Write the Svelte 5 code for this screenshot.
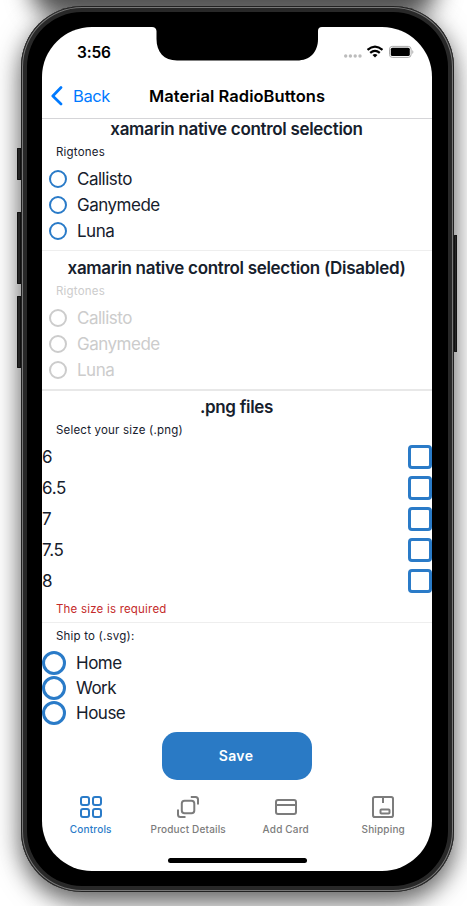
<script>
  const tones = ['Callisto', 'Ganymede', 'Luna'];
  const sizes = ['6', '6.5', '7', '7.5', '8'];
  const places = ['Home', 'Work', 'House'];
</script>

<div class="stage">
  <i class="shade"></i>
  <i class="key k1"></i><i class="key k2"></i><i class="key k3"></i><i class="key k4"></i>
  <div class="phone">
    <div class="screen">
      <svg class="notch" width="170" height="35" viewBox="0 0 170 35"><path d="M0 0H170Q166 0 166 4V12C166 25 158 33.500 145 33.500H25C12 33.500 4.500 25 4.500 12V4Q4 0 0 0Z" fill="#000" /></svg>
      <div class="status">
        <span class="time">3:56</span>
        <svg width="72" height="16" viewBox="0 0 72 16">
          <g fill="#bcbcbc"><circle cx="2.700" cy="11" r="1.700" /><circle cx="7.400" cy="11" r="1.700" /><circle cx="12.200" cy="11" r="1.700" /><circle cx="17" cy="11" r="1.700" /></g>
          <g fill="none" stroke="#000" stroke-width="2.200"><path d="M24.500 4.900Q32 -1.700 39.500 4.900" /><path d="M27.200 7.900Q32 3.700 36.800 7.900" /></g>
          <path d="M29.500 9.900Q32 7.900 34.500 9.900L32 12.500Z" />
          <rect x="46.500" y="1.400" width="21.600" height="11" rx="2.800" fill="none" stroke="#aaa" />
          <rect x="47.800" y="2.700" width="19" height="8.400" rx="1.600" />
          <path d="M69.300 5q2.200 2 0 4Z" fill="#aaa" />
        </svg>
      </div>
      <div class="nav">
        <svg width="14" height="20" viewBox="0 0 14 20"><path d="M11 1.500L2.800 10L11 18" fill="none" stroke="#007aff" stroke-width="2.700" stroke-linecap="round" stroke-linejoin="round" /></svg>
        <span class="back">Back</span>
        <span class="title">Material RadioButtons</span>
      </div>

      <section class="native">
        <h2>xamarin native control selection</h2>
        <p class="label">Rigtones</p>
        {#each tones as t}<div class="row"><i class="radio"></i><span>{t}</span></div>{/each}
      </section>
      <section class="native disabled">
        <h2>xamarin native control selection (Disabled)</h2>
        <p class="label">Rigtones</p>
        {#each tones as t}<div class="row"><i class="radio"></i><span>{t}</span></div>{/each}
      </section>
      <section class="png">
        <h2>.png files</h2>
        <p class="label">Select your size (.png)</p>
        {#each sizes as s}<div class="size"><span>{s}</span><i class="box"></i></div>{/each}
        <p class="error">The size is required</p>
      </section>
      <section class="svgs">
        <p class="label">Ship to (.svg):</p>
        {#each places as p}<div class="place"><i class="ring"></i><span>{p}</span></div>{/each}
      </section>
      <button>Save</button>

      <div class="tabs">
        <div class="tab on">
          <svg width="24" height="24" viewBox="0 0 24 24"><rect x="2" y="2" width="8" height="8" rx="2" /><rect x="14" y="2" width="8" height="8" rx="2" /><rect x="2" y="14" width="8" height="8" rx="2" /><rect x="14" y="14" width="8" height="8" rx="2" /></svg>
          <span>Controls</span>
        </div>
        <div class="tab">
          <svg width="24" height="24" viewBox="0 0 24 24"><rect x="5.800" y="5.800" width="12.500" height="12.500" rx="2.800" /><path d="M14.800 2H19.500Q22 2 22 4.500V9.500M2 14.500V19.500Q2 22 4.500 22H9.500" /></svg>
          <span>Product Details</span>
        </div>
        <div class="tab">
          <svg width="24" height="24" viewBox="0 0 24 24"><rect x="2" y="5" width="20" height="14" rx="2" /><path d="M2 10H22" /></svg>
          <span>Add Card</span>
        </div>
        <div class="tab">
          <svg width="24" height="24" viewBox="0 0 24 24"><rect x="2" y="2" width="20" height="20" rx="1.800" /><path d="M12 2V8" /><rect x="9.500" y="14.500" width="9" height="4" rx=".8" /></svg>
          <span>Shipping</span>
        </div>
      </div>
      <div class="home"></div>
    </div>
  </div>
</div>

<style>
  :global(body) { margin: 0; overflow: hidden; }
  .stage { position: relative; width: 467px; height: 906px; overflow: hidden; box-sizing: border-box; padding: 6px 13px 0 21px; font-family: Inter, "Liberation Sans", sans-serif; color: #16202c; background: #fff; }
  .shade { position: absolute; left: 30px; top: -50px; width: 407px; height: 66px; border-radius: 30px; background: #505050; filter: blur(12px); }
  .phone { position: relative; box-sizing: border-box; width: 433px; height: 886px; padding: 21px 22px 0 21px; border-radius: 61px; background: #000; box-shadow: inset 0 0 0 1px #222, inset 0 0 0 2px #777, inset 0 0 0 6px #282828, 0 10px 20px rgba(0,0,0,.38), 0 8px 30px rgba(0,0,0,.36); }
  .key { position: absolute; z-index: 2; left: 17px; width: 4px; background: #242424; box-shadow: inset 0 0 0 1px #111; border-radius: 1px 0 0 1px; }
  .k1 { top: 148px; height: 32px; } .k2 { top: 212px; height: 72px; } .k3 { top: 296px; height: 72px; }
  .k4 { left: 454px; top: 235px; height: 117px; width: 3px; }
  .screen { position: relative; width: 390px; height: 844px; border-radius: 50px; background: #fff; overflow: hidden; display: flex; flex-direction: column; }
  .notch { position: absolute; left: 109.500px; top: 0; }
  .status { height: 47px; flex: none; display: flex; justify-content: space-between; align-items: center; box-sizing: border-box; padding: 3px 17px 0 35px; }
  .time { font-size: 15.500px; font-weight: 600; color: #000; letter-spacing: -.2px; }
  .status svg { margin-top: 1px; }
  .nav { height: 44px; flex: none; display: flex; align-items: center; border-bottom: 1px solid #d5d5d8; padding-left: 8px; color: #007aff; white-space: nowrap; }
  .back { margin-left: 9px; font-size: 16.500px; width: 76px; letter-spacing: -.4px; }
  .title { color: #000; font-size: 16.500px; font-weight: 600; letter-spacing: .05px; }
  section { flex: none; box-sizing: border-box; border-bottom: 1px solid #eee; }
  h2, p { margin: 0; white-space: nowrap; }
  h2 { font-size: 17px; font-weight: 600; line-height: 20px; height: 20px; text-align: center; letter-spacing: -.31px; padding-right: 1px; }
  .label { font-size: 11.500px; line-height: 26px; height: 27px; padding-left: 14px; letter-spacing: .2px; }
  .native { height: 132px; }
  .row { height: 26px; display: flex; align-items: center; gap: 10px; padding-left: 7px; font-size: 17px; letter-spacing: -.5px; }
  .radio { box-sizing: border-box; width: 18px; height: 18px; border: 2px solid #2a7bc8; border-radius: 50%; }
  .disabled { height: 140px; padding-top: 7px; color: #ccc; border-bottom: 2px solid #e8e8e8; }
  .disabled h2 { color: #16202c; }
  .disabled .radio { border-color: #ccc; }
  .png { height: 232px; padding-top: 6px; }
  .png .label { height: 24px; }
  .size { height: 31px; display: flex; align-items: center; justify-content: space-between; font-size: 17px; letter-spacing: -.3px; }
  .box { box-sizing: border-box; width: 24px; height: 24px; border: 3px solid #2a7bc8; border-radius: 4px; }
  .error { color: #c42a2a; font-size: 11.500px; padding-left: 14px; line-height: 26px; letter-spacing: .2px; }
  .svgs { border: 0; height: 109px; }
  .place { height: 25px; display: flex; align-items: center; gap: 10px; font-size: 17px; letter-spacing: -.5px; }
  .ring { box-sizing: border-box; width: 24px; height: 24px; border: 3px solid #2a7bc8; border-radius: 50%; }
  button { flex: none; align-self: center; width: 150px; height: 48px; border: 0; padding: 0 2px 1px 0; border-radius: 15px; background: #2a7ac5; color: #fff; font: 600 14px Inter, sans-serif; letter-spacing: .4px; }
  .tabs { display: flex; flex: none; margin-top: 15px; height: 48px; }
  .tab { flex: 1; display: flex; flex-direction: column; align-items: center; color: #7c7c7c; font-size: 10px; font-weight: 500; line-height: 14px; white-space: nowrap; gap: 3px; letter-spacing: .17px; }
  .tab svg { fill: none; stroke: currentColor; stroke-width: 2; }
  .on { color: #2a7bc8; }
  .home { position: absolute; left: 126px; top: 831px; width: 139px; height: 5px; border-radius: 3px; background: #000; }
</style>
